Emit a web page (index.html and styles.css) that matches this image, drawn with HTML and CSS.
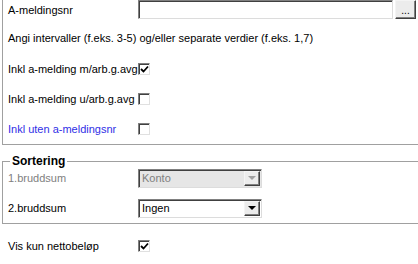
FILE: index.html
```html
<!DOCTYPE html>
<html>
  <head>
    <meta charset="UTF-8">
    <title>Utvalg</title>
    <link rel="stylesheet" href="styles.css">
  </head>
  <body>
    <div class="box">
      <div class="row">
        <span class="lbl">A-meldingsnr</span>
        <span class="field"></span>
        <span class="dots">...</span>
      </div>
      <div class="row hint">Angi intervaller (f.eks. 3-5) og/eller separate verdier (f.eks. 1,7)</div>
      <div class="row gap">
        <span class="lbl">Inkl a-melding m/arb.g.avg</span>
        <span class="chk"><svg width="9" height="9" viewBox="0 0 9 9"><polyline points="1,4 3.5,6.5 8,1.5" fill="none" stroke="#000" stroke-width="1.8"/></svg></span>
      </div>
      <div class="row gap">
        <span class="lbl">Inkl a-melding u/arb.g.avg</span>
        <span class="chk"></span>
      </div>
      <div class="row gap">
        <span class="lbl blue">Inkl uten a-meldingsnr</span>
        <span class="chk"></span>
      </div>
    </div>

    <fieldset class="sort">
      <legend>Sortering</legend>
      <div class="row">
        <span class="lbl grey">1.bruddsum</span>
        <span class="select off">Konto<span class="drop"><i></i></span></span>
      </div>
      <div class="row gap">
        <span class="lbl">2.bruddsum</span>
        <span class="select">Ingen<span class="drop"><i></i></span></span>
      </div>
    </fieldset>

    <div class="row last">
      <span class="lbl">Vis kun nettobeløp</span>
      <span class="chk"><svg width="9" height="9" viewBox="0 0 9 9"><polyline points="1,4 3.5,6.5 8,1.5" fill="none" stroke="#000" stroke-width="1.8"/></svg></span>
    </div>
  </body>
</html>
```

FILE: styles.css
```css
body {
  margin: 0;
  background: #fff;
  color: #000;
  font-family: "Liberation Sans", Arial, sans-serif;
  font-size: 11px;
  overflow: hidden;
}

.box {
  margin-left: 2px;
  border-left: 1px solid #a0a0a0;
  border-bottom: 1px solid #a0a0a0;
  padding: 0 0 5px 5px;
}

.row {
  display: flex;
  align-items: center;
  height: 20px;
}

.hint {
  margin-top: 8px;
}

.gap {
  margin-top: 10px;
}

.box .hint + .gap {
  margin-top: 11px;
}

.lbl {
  width: 130px;
  flex: none;
  white-space: nowrap;
}

.blue {
  color: #2f2fe6;
}

.grey {
  color: #808080;
}

.field {
  box-sizing: border-box;
  width: 255px;
  height: 19px;
  align-self: flex-start;
  border: 1px solid;
  border-color: #808080 #dcdcdc #dcdcdc #808080;
  box-shadow: inset 1px 1px 0 #404040;
}

.dots {
  box-sizing: border-box;
  width: 21px;
  height: 19px;
  margin-left: 2px;
  align-self: flex-start;
  background: #ececec;
  border: 1px solid;
  border-color: #f4f4f4 #404040 #404040 #f4f4f4;
  box-shadow: inset -1px -1px 0 #808080;
  text-align: center;
  line-height: 19px;
  font-size: 10px;
}

.chk {
  box-sizing: border-box;
  width: 12px;
  height: 12px;
  display: flex;
  align-items: center;
  justify-content: center;
  border: 1px solid;
  border-color: #808080 #e0e0e0 #e0e0e0 #808080;
  box-shadow: inset 1px 1px 0 #404040;
  background: #fff;
}

.sort {
  margin: 9px 0 0 2px;
  border: 1px solid #a0a0a0;
  border-right: none;
  padding: 0 0 5px 5px;
  min-width: 0;
}

.sort legend {
  margin-left: 2px;
  padding: 0 2px;
  font-weight: bold;
  font-size: 12px;
  line-height: 14px;
}

.select {
  position: relative;
  box-sizing: border-box;
  width: 124px;
  height: 19px;
  padding-left: 3px;
  line-height: 16px;
  border: 1px solid;
  border-color: #808080 #dcdcdc #dcdcdc #808080;
  box-shadow: inset 1px 1px 0 #404040;
  background: #fff;
}

.select.off {
  background: #e6e6e6;
  color: #808080;
}

.drop {
  position: absolute;
  top: 1px;
  right: 1px;
  box-sizing: border-box;
  width: 16px;
  height: 15px;
  display: flex;
  align-items: center;
  justify-content: center;
  background: #ececec;
  border: 1px solid;
  border-color: #f4f4f4 #404040 #404040 #f4f4f4;
  box-shadow: inset -1px -1px 0 #808080;
}

.drop i {
  width: 0;
  height: 0;
  border-left: 4px solid transparent;
  border-right: 4px solid transparent;
  border-top: 4px solid #000;
}

.off .drop i {
  border-top-color: #a0a0a0;
}

.last {
  margin: 12px 0 0 8px;
}
```
